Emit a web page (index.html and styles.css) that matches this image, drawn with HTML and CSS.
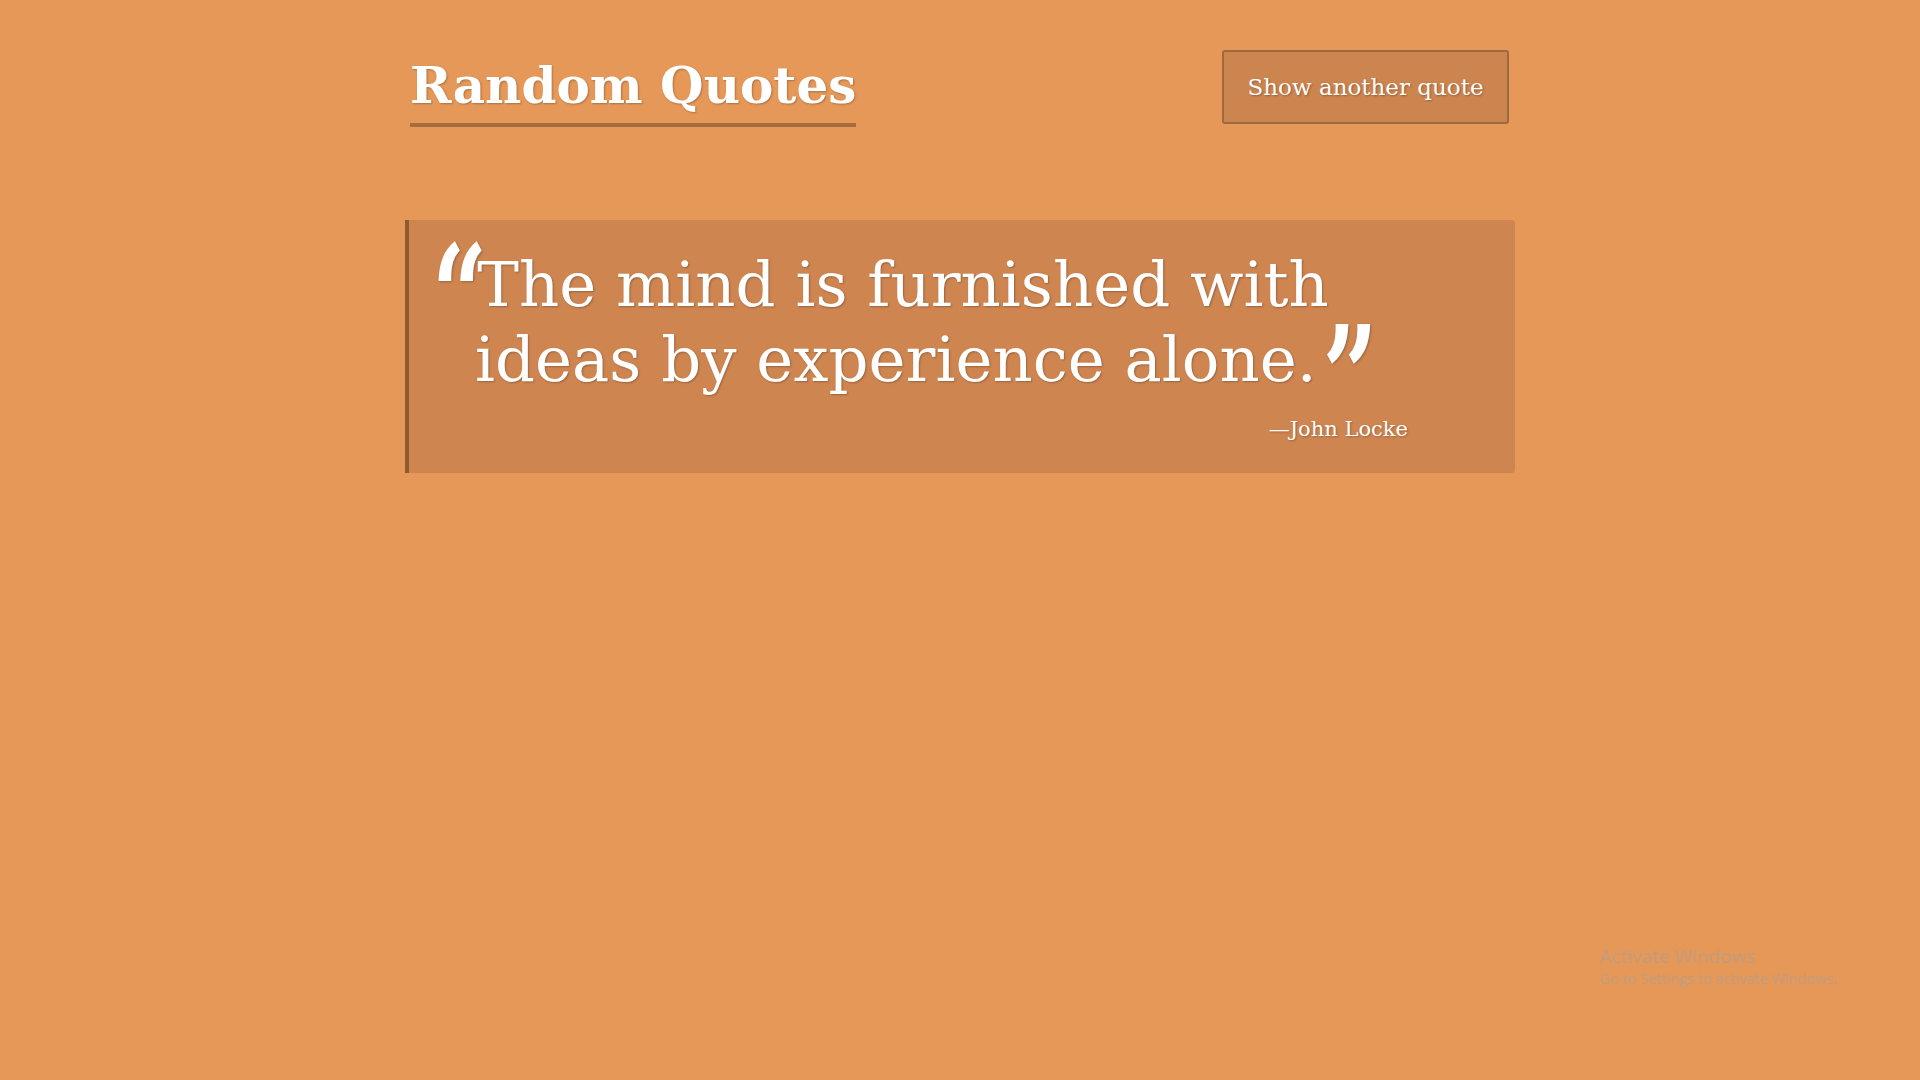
FILE: index.html
```html
<!DOCTYPE html>
<html lang="en">
<head>
<meta charset="utf-8">
<title>Random Quotes</title>
<link rel="stylesheet" href="styles.css">
</head>
<body>
<div class="container">
  <header class="header">
    <h1 class="title">Random Quotes</h1>
    <button class="btn">Show another quote</button>
  </header>
  <blockquote class="quote">
    <p class="quote-text"><span class="qmark open">&ldquo;</span>The mind is furnished with ideas by experience alone. <span class="qmark close">&rdquo;</span></p>
    <footer class="author">&mdash;John Locke</footer>
  </blockquote>
</div>
<div class="watermark">
  <div class="wm-title">Activate Windows</div>
  <div class="wm-sub">Go to Settings to activate Windows.</div>
</div>
</body>
</html>
```
FILE: styles.css
```css
html, body {
  margin: 0;
  padding: 0;
}
body {
  background: #e59858;
  font-family: "DejaVu Serif", "Liberation Serif", serif;
  color: #fff;
  min-height: 1080px;
}
.container {
  width: 1110px;
  margin: 0 auto;
}
.header {
  display: flex;
  justify-content: space-between;
  align-items: flex-start;
  padding-top: 50px;
}
.title {
  margin: 2px 0 0 5px;
  padding-bottom: 3px;
  font-size: 50px;
  font-weight: bold;
  line-height: 68px;
  border-bottom: 4px solid #a66d3f;
  text-shadow: 1px 1px 2px rgba(0,0,0,0.25);
}
.btn {
  margin: 0 6px 0 0;
  width: 287px;
  height: 74px;
  background: #cd854f;
  border: 2px solid #9c6a3e;
  border-radius: 3px;
  color: #fff;
  font-family: "DejaVu Serif", "Liberation Serif", serif;
  font-size: 23px;
  text-shadow: 1px 1px 2px rgba(0,0,0,0.3);
  padding: 0;
}
.quote {
  margin: 93px 0 0 0;
  background: #ce8550;
  border-left: 4px solid #8f5b30;
  border-radius: 0 4px 4px 0;
  padding: 27px 0 31px 66px;
}
.quote-text {
  margin: 0;
  font-size: 62.5px;
  line-height: 75px;
  width: 960px;
  text-shadow: 1px 1px 2px rgba(0,0,0,0.25);
}
.qmark {
  display: inline-block;
  font-weight: bold;
  line-height: 0;
  font-size: 96px;
  transform: scale(1, 1.45);
  transform-origin: 50% 0;
}
.qmark.open {
  margin-left: -43px;
  margin-right: -10px;
  vertical-align: -23px;
}
.qmark.close {
  margin-left: -14px;
  vertical-align: -29px;
}
.author {
  text-align: right;
  padding-right: 107px;
  font-size: 21px;
  line-height: 26px;
  margin-top: 19px;
  text-shadow: 1px 1px 2px rgba(0,0,0,0.25);
}
.watermark {
  position: fixed;
  left: 1600px;
  top: 944px;
  color: rgba(160, 160, 160, 0.55);
  font-family: "Open Sans", "Noto Sans", sans-serif;
}
.wm-title {
  font-size: 19px;
  line-height: 24px;
}
.wm-sub {
  font-size: 14.5px;
  line-height: 22px;
}
```
